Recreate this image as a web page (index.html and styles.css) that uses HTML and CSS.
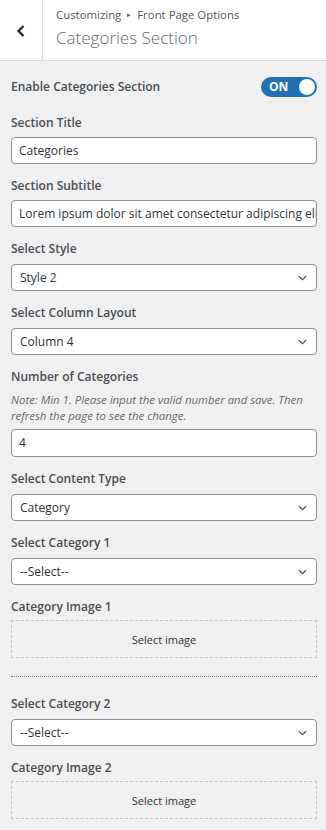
FILE: index.html
```html
<!DOCTYPE html>
<html>
<head>
<meta charset="utf-8">
<link rel="stylesheet" href="styles.css">
</head>
<body>
<header class="head">
  <button class="back" aria-label="Back">
    <svg width="10" height="14" viewBox="0 0 10 14"><path d="M7.5 2 L2.5 7 L7.5 12" fill="none" stroke="#1d2327" stroke-width="2.2"/></svg>
  </button>
  <div class="titles">
    <div class="crumb">Customizing <span class="sep">▸</span> Front Page Options</div>
    <div class="title">Categories Section</div>
  </div>
</header>
<main class="controls">
  <div class="toggle-row">
    <span class="label">Enable Categories Section</span>
    <span class="toggle"><span class="on">ON</span><span class="knob"></span></span>
  </div>
  <div class="control">
    <span class="label">Section Title</span>
    <div class="input">Categories</div>
  </div>
  <div class="control">
    <span class="label">Section Subtitle</span>
    <div class="input">Lorem ipsum dolor sit amet consectetur adipiscing elit</div>
  </div>
  <div class="control">
    <span class="label sel">Select Style</span>
    <div class="select">Style 2<svg class="chev" width="9" height="6" viewBox="0 0 9 6"><path d="M1 1.2 L4.5 4.6 L8 1.2" fill="none" stroke="#50575e" stroke-width="1.3"/></svg></div>
  </div>
  <div class="control">
    <span class="label sel">Select Column Layout</span>
    <div class="select">Column 4<svg class="chev" width="9" height="6" viewBox="0 0 9 6"><path d="M1 1.2 L4.5 4.6 L8 1.2" fill="none" stroke="#50575e" stroke-width="1.3"/></svg></div>
  </div>
  <div class="control">
    <span class="label">Number of Categories</span>
    <p class="note">Note: Min 1. Please input the valid number and save. Then refresh the page to see the change.</p>
    <div class="input num">4</div>
  </div>
  <div class="control">
    <span class="label sel">Select Content Type</span>
    <div class="select">Category<svg class="chev" width="9" height="6" viewBox="0 0 9 6"><path d="M1 1.2 L4.5 4.6 L8 1.2" fill="none" stroke="#50575e" stroke-width="1.3"/></svg></div>
  </div>
  <div class="control">
    <span class="label sel">Select Category 1</span>
    <div class="select">--Select--<svg class="chev" width="9" height="6" viewBox="0 0 9 6"><path d="M1 1.2 L4.5 4.6 L8 1.2" fill="none" stroke="#50575e" stroke-width="1.3"/></svg></div>
  </div>
  <div class="control">
    <span class="label img">Category Image 1</span>
    <div class="imgbox">Select image</div>
  </div>
  <hr class="divider">
  <div class="control">
    <span class="label sel">Select Category 2</span>
    <div class="select">--Select--<svg class="chev" width="9" height="6" viewBox="0 0 9 6"><path d="M1 1.2 L4.5 4.6 L8 1.2" fill="none" stroke="#50575e" stroke-width="1.3"/></svg></div>
  </div>
  <div class="control">
    <span class="label img">Category Image 2</span>
    <div class="imgbox">Select image</div>
  </div>
</main>
</body>
</html>
```
FILE: styles.css
```css
* { box-sizing: border-box; }
html, body { margin: 0; padding: 0; }
body {
  background: #f0f0f1;
  font-family: "Open Sans", "Noto Sans", sans-serif;
  color: #2c3338;
  width: 326px;
  height: 830px;
  overflow: hidden;
}
.head {
  display: flex;
  height: 61px;
  background: #fff;
  border-bottom: 1px solid #dcdcde;
}
.back {
  width: 43px;
  height: 60px;
  border: 0;
  border-right: 1px solid #dcdcde;
  background: #fff;
  padding: 0;
  display: flex;
  align-items: center;
  justify-content: center;
}
.back svg { margin-top: 1px; }
.titles {
  padding: 6px 0 0 13px;
}
.crumb {
  font-size: 11.4px;
  line-height: 18px;
  color: #50575e;
}
.crumb .sep { font-size: 7px; vertical-align: 2px; margin: 0 3px; }
.title {
  font-size: 17px;
  line-height: 26px;
  font-weight: 300;
  color: #646970;
  margin-top: 1px;
}
.controls {
  display: flex;
  flex-direction: column;
  gap: 12px;
  padding: 16px 9px 12px 11px;
}
.toggle-row {
  display: flex;
  align-items: center;
  justify-content: space-between;
  height: 20px;
  margin-bottom: 4px;
}
.label {
  display: block;
  font-size: 12px;
  line-height: 20px;
  font-weight: 600;
  color: #484e54;
}
.toggle {
  width: 56px;
  height: 20px;
  border-radius: 10px;
  background: #2271b1;
  display: flex;
  align-items: center;
  justify-content: space-between;
  padding: 0 2px 0 8px;
}
.on {
  color: #fff;
  font-size: 12px;
  font-weight: 700;
  line-height: 1;
}
.knob {
  width: 16px;
  height: 16px;
  border-radius: 50%;
  background: #fff;
}
.control { display: flex; flex-direction: column; }
.control .label { margin-bottom: 4px; }
.control .label.sel { margin-bottom: 5px; }
.control .label.img { margin-bottom: 3px; }
.input, .select {
  height: 27px;
  background: #fff;
  border: 1px solid #8c8f94;
  border-radius: 4px;
  font-size: 12px;
  line-height: 25px;
  color: #2c3338;
  padding: 0 7px;
  white-space: nowrap;
  overflow: hidden;
}
.select {
  display: flex;
  align-items: center;
  justify-content: space-between;
  padding: 0 9px 0 8px;
}
.input.num { height: 28px; line-height: 26px; }
.note {
  margin: 1px 0 5px;
  font-size: 11.4px;
  line-height: 16px;
  font-style: italic;
  color: #646970;
}
.imgbox {
  height: 38px;
  border: 1px dashed #c3c4c7;
  display: flex;
  align-items: center;
  justify-content: center;
  font-size: 11px;
  color: #2c3338;
}
.divider {
  margin: 6px 0 5px;
  border: 0;
  border-top: 1px dotted #787c82;
  height: 0;
}
```
